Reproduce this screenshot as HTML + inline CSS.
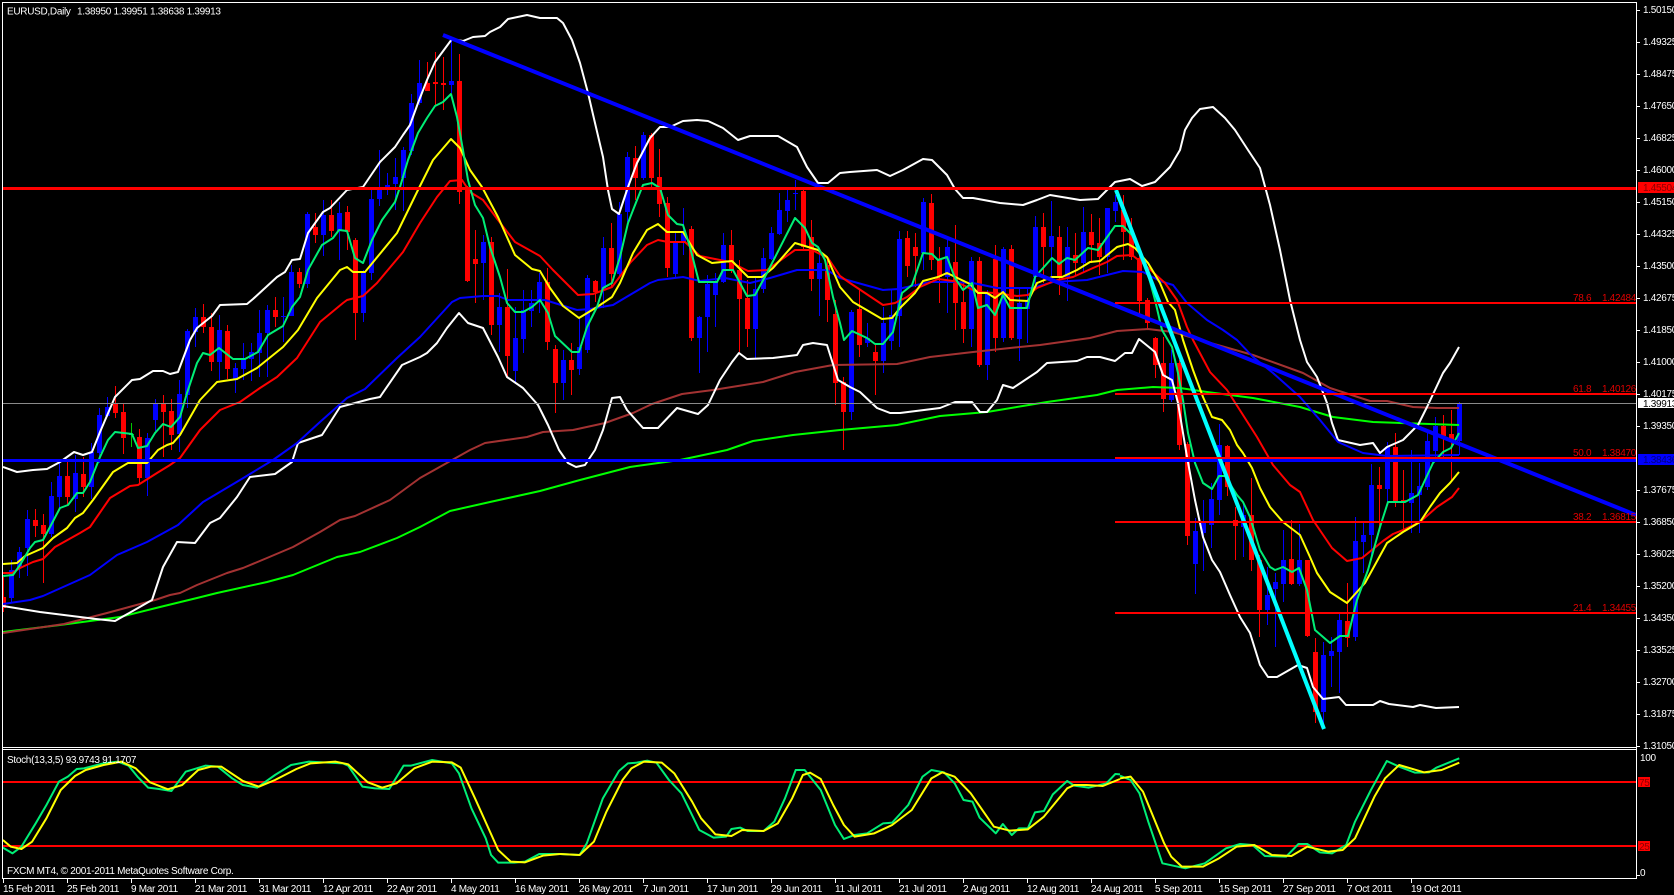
<!DOCTYPE html>
<html><head><meta charset="utf-8"><title>EURUSD Daily</title>
<style>
html,body{margin:0;padding:0;background:#000;width:1674px;height:895px;overflow:hidden}
svg{display:block}
text{font-family:"Liberation Sans",sans-serif;font-size:10px;letter-spacing:-.3px;fill:#fff}
.l{fill:none;stroke-linejoin:round;stroke-width:2}
.n{vector-effect:non-scaling-stroke}
</style></head><body>
<svg width="1674" height="895" viewBox="0 0 1674 895" xmlns="http://www.w3.org/2000/svg">
<defs><clipPath id="c"><rect x="3" y="3" width="1633" height="744"/></clipPath><clipPath id="s"><rect x="3" y="750" width="1633" height="128"/></clipPath></defs>
<rect width="1674" height="895" fill="#000"/>
<g clip-path="url(#c)">
<g shape-rendering="crispEdges" fill="none">
<path stroke="#00f" stroke-width="1" d="M11.5 560V603M19.5 547V578M27.5 510V576M51.5 482V537M59.5 460V510M75.5 455V512M91.5 443V499M99.5 408V463M107.5 397V417M147.5 433V496M155.5 399V431M179.5 380V452M187.5 329V408M195.5 308V347M219.5 315V380M235.5 363V393M243.5 343V380M251.5 343V381M259.5 310V377M267.5 305V377M283.5 297V342M291.5 265V316M307.5 212V288M323.5 200V256M339.5 202V260M363.5 270V322M371.5 190V280M379.5 150V206M387.5 173V195M395.5 158V210M403.5 147V211M411.5 94V155M419.5 60V105M451.5 40V93M483.5 235V300M499.5 293V352M515.5 307V382M523.5 290V353M531.5 290V327M539.5 273V313M563.5 350V400M579.5 317V375M587.5 275V353M603.5 237V308M619.5 202V277M627.5 152V222M643.5 132V180M675.5 233V278M683.5 208V255M699.5 316V373M707.5 275V352M715.5 273V327M723.5 233V283M755.5 277V358M763.5 248V293M771.5 227V260M779.5 193V235M787.5 190V222M795.5 180V210M819.5 250V316M851.5 310V420M867.5 323V347M883.5 307V373M891.5 290V350M899.5 231V347M923.5 198V270M947.5 240V313M971.5 257V347M987.5 290V380M1003.5 247V342M1019.5 287V361M1027.5 287V343M1035.5 216V290M1051.5 201V283M1067.5 227V301M1083.5 207V272M1107.5 208V273M1115.5 195V222M1171.5 350V402M1195.5 518V594M1203.5 500V571M1211.5 483V548M1219.5 424V515M1243.5 503V557M1267.5 567V625M1275.5 573V647M1283.5 530V602M1299.5 524V586M1323.5 642V725M1331.5 637V687M1339.5 613V693M1355.5 517V641M1363.5 523V573M1371.5 464V560M1387.5 442V503M1411.5 450V533M1419.5 463V533M1427.5 433V490M1435.5 417V457M1459.5 402V455"/>
<path stroke="#00f" stroke-width="5" d="M11.5 570V598M19.5 552V567M27.5 519V548M51.5 496V534M59.5 476V497M75.5 473V499M91.5 452V487M99.5 415V453M107.5 407V416M147.5 438V478M155.5 403V420M179.5 394V434M187.5 331V395M195.5 317V332M219.5 330V362M235.5 368V380M243.5 358V369M251.5 352V359M259.5 333V353M267.5 310V333M283.5 316V317M291.5 272V316M307.5 214V284M323.5 215V235M339.5 213V231M363.5 273V313M371.5 199V273M379.5 190V199M387.5 185V187M395.5 177V184M403.5 150V178M411.5 103V151M419.5 83V103M451.5 81V85M483.5 242V263M499.5 307V325M515.5 338V371M523.5 310V339M531.5 303V311M539.5 282V301M563.5 360V383M579.5 347V369M587.5 278V350M603.5 248V290M619.5 214V274M627.5 157V212M643.5 135V178M675.5 243V274M683.5 233V243M699.5 317V338M707.5 284V317M715.5 282V295M723.5 245V282M755.5 289V329M763.5 258V289M771.5 233V259M779.5 210V234M787.5 200V211M795.5 193V194M819.5 263V279M851.5 312V412M867.5 338V343M883.5 323V361M891.5 315V341M899.5 239V316M923.5 202V253M947.5 247V277M971.5 261V329M987.5 293V365M1003.5 249V338M1019.5 303V339M1027.5 300V309M1035.5 227V277M1051.5 236V247M1067.5 247V277M1083.5 232V263M1107.5 208V257M1115.5 202V211M1171.5 363V400M1195.5 531V564M1203.5 523V533M1211.5 499V525M1219.5 445V500M1243.5 515V527M1267.5 595V610M1275.5 582V589M1283.5 560V584M1299.5 560V584M1323.5 655V712M1331.5 651V656M1339.5 620V652M1355.5 541V637M1363.5 535V542M1371.5 485V535M1387.5 447V489M1411.5 493V503M1419.5 486V495M1427.5 441V487M1435.5 426V451M1459.5 403V441"/>
<path stroke="#f00" stroke-width="1" d="M3.5 577V612M35.5 509V537M43.5 514V583M67.5 460V505M83.5 457V497M115.5 386V418M123.5 404V454M139.5 429V485M163.5 395V457M171.5 399V450M203.5 304V333M211.5 313V371M227.5 325V379M275.5 297V327M299.5 268V288M315.5 213V243M331.5 200V237M347.5 206V250M355.5 238V340M427.5 62V91M435.5 52V105M443.5 57V110M459.5 54V204M467.5 186V282M475.5 230V303M491.5 237V335M507.5 269V377M547.5 268V350M555.5 345V413M571.5 343V395M595.5 280V302M611.5 223V287M635.5 146V200M651.5 133V187M659.5 149V217M667.5 197V277M691.5 226V341M731.5 230V273M739.5 260V352M747.5 280V347M803.5 190V250M811.5 220V291M827.5 260V322M835.5 300V405M843.5 377V450M859.5 290V357M875.5 343V395M907.5 231V277M915.5 233V287M931.5 194V270M939.5 247V303M955.5 225V330M963.5 283V343M979.5 257V367M995.5 245V352M1011.5 245V340M1043.5 213V283M1059.5 226V295M1075.5 233V275M1091.5 214V263M1099.5 218V275M1123.5 195V260M1131.5 218V260M1139.5 255V315M1147.5 298V330M1155.5 337V378M1163.5 337V412M1179.5 360V450M1187.5 442V545M1227.5 445V496M1235.5 507V560M1251.5 478V571M1259.5 555V637M1291.5 520V585M1307.5 560V637M1315.5 638V723M1347.5 583V647M1379.5 467V527M1395.5 433V507M1403.5 470V530M1443.5 415V457M1451.5 410V480"/>
<path stroke="#f00" stroke-width="5" d="M3.5 597V608M35.5 520V526M43.5 525V534M67.5 476V497M83.5 474V487M115.5 403V413M123.5 412V438M139.5 437V478M163.5 403V412M171.5 411V435M203.5 317V327M211.5 327V362M227.5 331V369M275.5 310V317M299.5 272V284M315.5 227V235M331.5 215V231M347.5 212V232M355.5 240V313M427.5 83V91M435.5 82V84M443.5 83V85M459.5 81V192M467.5 188V281M475.5 259V264M491.5 242V325M507.5 307V356M547.5 282V342M555.5 349V383M571.5 360V370M595.5 281V292M611.5 248V274M635.5 158V178M651.5 135V178M659.5 177V204M667.5 203V268M691.5 229V338M731.5 245V270M739.5 270V299M747.5 298V329M803.5 191V247M811.5 237V279M827.5 265V300M835.5 314V383M843.5 382V412M859.5 309V345M875.5 352V361M907.5 238V266M915.5 247V256M931.5 203V260M939.5 260V277M955.5 262V303M963.5 302V329M979.5 261V365M995.5 259V338M1011.5 249V338M1043.5 227V247M1059.5 237V277M1075.5 255V263M1091.5 232V245M1099.5 243V257M1123.5 210V232M1131.5 232V257M1139.5 258V301M1147.5 300V323M1155.5 338V365M1163.5 363V399M1179.5 363V445M1187.5 444V536M1227.5 446V487M1235.5 520V526M1251.5 515V560M1259.5 560V610M1291.5 559V584M1307.5 560V636M1315.5 652V712M1347.5 621V638M1379.5 485V489M1395.5 447V503M1403.5 500V501M1443.5 426V436M1451.5 434V442"/>
<path stroke="#0c0" stroke-width="1" d="M131.5 423V447M129 434.5H134"/>
</g>
<!-- lime -->
<polyline class="l" stroke="#0f0" points="3,632 60,625 120,617 160,607 197,598 217,593 267,582 293,575 337,557 360,552 397,538 420,527 450,511 490,502 540,491 580,480 630,467 680,460 727,450 753,441 793,435 840,430 897,425 940,416 987,412 1047,402 1097,395 1117,390 1153,387 1180,388 1207,392 1253,398 1300,407 1333,417 1373,422 1400,423 1459,425"/>
<!-- brown -->
<polyline class="l" stroke="#a33232" points="3,633 64,624 107,613 155,600 170,595 180,593 197,585 227,573 243,568 267,558 293,547 320,532 340,520 355,516 390,500 420,478 445,464 470,450 485,443 527,437 543,432 573,430 605,423 633,413 652,404 682,394 713,390 763,382 795,372 833,365 897,364 930,357 973,352 1010,348 1040,345 1090,338 1117,331 1148,329 1173,332 1207,342 1253,355 1303,373 1330,388 1370,401 1387,401 1413,407 1437,408 1459,408"/>
<!-- lower band -->
<polyline class="l" stroke="#fff" points="3,606 40,612 96,619 115,621 138,608 152,600 163,567 177,542 195,543 210,523 220,518 237,497 250,477 275,474 292,462 298,443 322,435 340,407 370,399 380,397 402,365 420,357 427,353 437,343 447,328 459,313 468,323 483,328 498,357 507,377 523,388 538,405 548,425 559,450 568,463 576,467 585,465 595,450 603,430 612,398 620,397 627,410 643,428 658,428 677,408 698,414 708,405 720,380 732,362 739,353 747,359 773,358 797,355 803,345 813,343 827,345 838,380 850,387 860,392 877,408 890,413 900,413 940,408 955,402 972,402 980,412 987,412 997,400 1003,385 1013,388 1037,372 1047,363 1077,361 1087,357 1100,357 1115,361 1125,353 1132,353 1139,339 1155,352 1163,375 1172,380 1178,403 1187,457 1195,500 1203,537 1212,560 1220,572 1230,595 1240,617 1250,633 1260,665 1268,677 1277,677 1298,665 1307,668 1313,687 1323,699 1339,697 1346,705 1373,705 1380,701 1389,704 1413,707 1420,705 1436,708 1459,707"/>
<!-- upper band -->
<polyline class="l" stroke="#fff" points="3,467 17,472 33,470 47,469 60,462 74,452 83,455 92,452 100,432 115,397 132,380 140,379 153,371 163,371 170,374 178,372 190,340 197,328 212,316 220,305 247,304 253,299 277,277 285,272 292,260 300,259 308,233 323,212 330,208 347,190 363,187 380,162 395,147 403,135 410,125 418,103 427,80 435,62 452,39 463,41 473,37 485,36 490,32 500,27 508,19 527,15 540,18 557,18 563,23 572,40 580,63 588,93 595,123 603,157 608,190 612,209 619,214 628,187 637,163 650,138 660,127 670,127 683,121 697,120 708,121 723,128 738,140 750,136 778,136 797,147 807,167 818,183 828,183 840,173 850,172 877,170 890,176 903,170 923,159 932,160 947,175 955,189 963,198 973,198 1000,203 1023,205 1037,200 1050,195 1080,200 1098,199 1115,182 1130,179 1142,186 1155,182 1170,167 1180,150 1185,130 1192,118 1200,109 1213,107 1225,118 1235,130 1248,150 1260,168 1270,205 1280,250 1290,300 1300,340 1307,362 1317,377 1327,403 1332,423 1338,440 1360,445 1373,443 1380,453 1387,447 1403,440 1418,425 1427,407 1435,390 1443,373 1450,363 1459,347"/>
<!-- blue ema -->
<polyline class="l" stroke="#00f" points="3,604 30,600 43,596 90,575 117,555 147,542 178,525 203,502 240,480 273,460 297,443 320,422 347,398 365,389 397,358 420,337 452,302 460,298 483,296 498,296 508,300 545,300 577,310 590,309 613,305 650,283 658,280 683,277 700,281 725,278 750,283 770,278 797,270 827,270 840,278 883,290 898,289 930,282 953,282 973,283 997,288 1033,288 1053,282 1087,280 1123,271 1143,272 1160,281 1173,285 1187,303 1207,320 1223,330 1237,340 1253,357 1273,373 1300,397 1320,420 1338,442 1363,453 1387,456 1459,455"/>
<!-- red ema -->
<polyline class="l" stroke="#f00" points="3,573 12,573 20,568 33,562 43,559 55,547 80,533 90,527 110,498 130,486 138,485 157,473 170,465 180,458 200,430 220,410 240,402 260,388 277,377 297,358 320,322 343,303 347,300 363,296 377,283 403,252 420,223 437,197 450,181 462,180 470,192 483,200 498,220 515,242 540,256 553,270 578,295 593,294 612,287 630,263 647,245 658,240 668,242 685,242 700,256 730,262 748,271 767,270 795,250 812,250 828,258 840,276 850,283 883,305 895,303 907,297 920,287 938,279 953,281 963,285 977,292 995,293 1017,296 1028,295 1037,288 1057,280 1073,277 1093,268 1107,262 1117,256 1132,255 1145,265 1165,283 1177,300 1187,327 1193,340 1210,372 1227,390 1243,415 1257,437 1273,465 1290,485 1300,492 1313,520 1332,548 1347,561 1362,558 1383,541 1393,534 1403,530 1420,522 1437,507 1452,497 1459,488"/>
<!-- yellow -->
<polyline class="l" stroke="#ff0" points="3,564 17,563 25,556 43,548 53,538 67,528 75,518 83,513 93,500 113,472 128,463 147,463 158,450 167,445 173,443 180,435 200,400 217,382 237,379 257,368 283,347 298,330 317,298 340,270 347,267 353,272 365,272 397,233 418,190 433,160 451,139 460,148 470,170 482,187 498,217 515,255 532,269 540,271 550,288 563,306 579,318 597,307 612,297 620,283 633,253 647,230 658,224 667,232 683,232 697,255 712,263 732,261 748,277 762,277 773,268 795,243 818,250 827,257 840,287 853,302 882,319 892,318 900,308 915,293 923,281 938,277 947,273 970,284 978,293 987,293 995,298 1003,292 1010,300 1028,301 1037,283 1052,277 1062,277 1077,270 1090,262 1100,261 1117,247 1128,244 1135,248 1148,263 1160,283 1168,302 1175,310 1183,340 1193,370 1203,397 1212,417 1222,420 1230,430 1237,445 1243,453 1252,468 1260,488 1270,507 1283,522 1300,535 1310,557 1317,573 1330,592 1347,603 1365,583 1387,543 1403,532 1420,522 1430,507 1440,493 1450,483 1459,472"/>
<!-- spring green -->
<polyline class="l" stroke="#00ee76" points="3,576 13,575 20,565 30,548 35,542 43,540 50,527 60,508 68,505 77,493 83,493 90,482 100,457 108,440 115,432 132,434 138,448 147,446 155,433 163,424 171,427 180,417 187,393 197,363 203,353 210,355 219,348 233,359 245,359 258,352 268,335 283,326 292,307 300,297 308,270 322,245 333,238 339,230 347,231 355,258 363,263 372,240 382,220 395,202 400,187 408,160 418,133 427,118 435,106 443,102 451,94 457,117 463,150 468,180 475,205 483,218 490,247 500,277 507,303 515,312 523,312 532,307 540,300 548,313 555,336 572,352 579,352 587,327 597,307 603,288 612,283 620,257 628,223 637,200 643,185 652,183 660,188 668,215 677,224 683,225 690,247 699,282 717,282 723,270 733,270 747,296 755,295 767,273 795,218 805,228 812,243 818,247 825,260 833,297 840,323 844,340 852,331 867,338 875,344 883,344 893,332 902,293 912,285 923,253 932,254 938,260 947,257 955,278 963,290 972,283 978,308 987,305 995,315 1003,295 1010,308 1027,308 1035,277 1052,258 1059,264 1067,258 1075,260 1088,248 1098,250 1115,226 1123,226 1132,235 1145,263 1155,300 1162,330 1172,347 1178,373 1183,400 1188,433 1195,463 1203,483 1212,489 1219,476 1225,476 1237,495 1243,502 1250,517 1260,550 1270,567 1275,570 1283,567 1292,572 1299,568 1307,590 1315,630 1330,643 1340,636 1348,636 1357,600 1368,570 1380,527 1388,502 1405,502 1418,495 1433,463 1443,452 1451,448 1459,433"/>
<!-- objects -->
<g shape-rendering="crispEdges">
<rect x="3" y="403" width="1633" height="1" fill="#8a8a8a"/>
<rect x="3" y="459" width="1633" height="3" fill="#00f"/>
</g>
<line x1="443" y1="35" x2="1636" y2="515" stroke="#00f" stroke-width="4"/>
<line x1="1116" y1="190" x2="1324" y2="729" stroke="#0ff" stroke-width="4"/>
<g shape-rendering="crispEdges">
<rect x="3" y="187" width="1633" height="3" fill="#f00"/>
<rect x="1115" y="302" width="521" height="2" fill="#f00"/>
<rect x="1115" y="393" width="521" height="2" fill="#f00"/>
<rect x="1115" y="457" width="521" height="2" fill="#f00"/>
<rect x="1115" y="521" width="521" height="2" fill="#f00"/>
<rect x="1115" y="612" width="521" height="2" fill="#f00"/>
</g>
</g>
<!-- fib labels -->
<g style="fill:#e00000">
<text x="1573" y="301" style="fill:#e00000">78.6</text><text x="1636" y="301" text-anchor="end" style="fill:#e00000">1.42484</text>
<text x="1573" y="392" style="fill:#e00000">61.8</text><text x="1636" y="392" text-anchor="end" style="fill:#e00000">1.40126</text>
<text x="1573" y="456" style="fill:#e00000">50.0</text><text x="1636" y="456" text-anchor="end" style="fill:#e00000">1.38470</text>
<text x="1573" y="520" style="fill:#e00000">38.2</text><text x="1636" y="520" text-anchor="end" style="fill:#e00000">1.36815</text>
<text x="1573" y="611" style="fill:#e00000">21.4</text><text x="1636" y="611" text-anchor="end" style="fill:#e00000">1.34455</text>
</g>
<!-- stoch -->
<g clip-path="url(#s)">
<g shape-rendering="crispEdges"><rect x="3" y="781" width="1633" height="2" fill="#f00"/><rect x="3" y="845" width="1633" height="2" fill="#f00"/></g>
<g transform="translate(0 695) scale(.35714 .33333)">
<polyline class="l n" stroke="#00ee76" points="8,458 35,475 60,455 100,385 130,330 165,260 190,245 215,222 235,220 290,205 330,200 360,212 385,245 415,278 445,282 480,288 520,230 575,212 610,215 650,250 680,270 720,278 770,240 815,210 865,200 960,205 975,212 1015,275 1050,280 1090,282 1130,212 1150,212 1210,195 1265,205 1285,235 1320,340 1360,430 1375,480 1395,503 1440,503 1470,500 1510,477 1568,477"/>
<polyline class="l n" stroke="#ff0" points="8,435 30,455 60,462 90,440 130,370 170,285 210,243 240,225 290,210 340,200 380,220 420,262 470,283 510,270 555,225 590,215 620,215 680,258 725,275 770,255 830,222 870,205 940,200 975,208 1030,262 1070,278 1110,265 1160,220 1210,200 1265,202 1290,218 1330,310 1395,465 1430,500 1470,502 1520,482 1568,477"/>
</g>
<g transform="translate(560 695) scale(.35714 .33333)">
<polyline class="l n" stroke="#00ee76" points="0,477 55,480 75,445 120,310 165,228 190,205 215,203 245,197 270,203 305,255 340,295 390,405 430,428 465,425 480,402 505,398 525,408 570,408 600,380 630,310 660,225 685,225 730,285 770,390 795,432 825,420 860,415 905,385 930,383 975,330 1015,245 1040,225 1075,232 1105,265 1130,315 1155,320 1175,368 1220,415 1240,387 1265,420 1285,400 1310,400 1330,352 1355,348 1380,298 1420,258 1440,272 1480,278 1530,265 1555,237 1568,238"/>
<polyline class="l n" stroke="#ff0" points="0,477 55,480 95,440 130,350 175,255 200,220 235,200 285,203 320,235 370,320 395,370 435,418 480,423 510,405 570,408 610,385 650,310 680,240 700,233 730,252 765,330 795,390 825,425 880,415 930,390 985,345 1040,250 1070,232 1105,245 1150,295 1215,395 1260,407 1310,403 1355,365 1420,280 1440,270 1475,270 1520,273 1568,252"/>
</g>
<g transform="translate(1120 695) scale(.3534 .33333)">
<polyline class="l n" stroke="#00ee76" points="0,242 30,255 55,295 80,380 120,505 185,520 240,505 300,460 340,447 375,450 410,483 470,485 505,447 530,447 565,472 600,475 640,450 665,380 710,285 755,198 790,215 835,233 875,232 895,218 960,190"/>
<polyline class="l n" stroke="#ff0" points="0,250 30,245 65,290 125,445 145,485 175,515 235,515 280,490 330,455 380,450 430,480 485,483 530,455 590,470 630,465 665,430 720,305 750,250 790,210 860,232 910,225 960,203"/>
</g>
</g>
<!-- frame -->
<g fill="#fff" shape-rendering="crispEdges">
<rect x="2" y="2" width="1635" height="1"/>
<rect x="2" y="2" width="1" height="877"/>
<rect x="1636" y="2" width="1" height="877"/>
<rect x="2" y="747" width="1635" height="1"/>
<rect x="2" y="749" width="1635" height="1"/>
<rect x="2" y="878" width="1635" height="1"/>
<path d="M1637 10h3v1h-3zM1637 42h3v1h-3zM1637 74h3v1h-3zM1637 106h3v1h-3zM1637 138h3v1h-3zM1637 170h3v1h-3zM1637 202h3v1h-3zM1637 234h3v1h-3zM1637 266h3v1h-3zM1637 298h3v1h-3zM1637 330h3v1h-3zM1637 362h3v1h-3zM1637 394h3v1h-3zM1637 426h3v1h-3zM1637 490h3v1h-3zM1637 522h3v1h-3zM1637 554h3v1h-3zM1637 586h3v1h-3zM1637 618h3v1h-3zM1637 650h3v1h-3zM1637 682h3v1h-3zM1637 714h3v1h-3zM1637 746h3v1h-3zM1637 875h3v1h-3z"/>
<path d="M3 879h1v4H3zM67 879h1v4h-1zM131 879h1v4h-1zM195 879h1v4h-1zM259 879h1v4h-1zM323 879h1v4h-1zM387 879h1v4h-1zM451 879h1v4h-1zM515 879h1v4h-1zM579 879h1v4h-1zM643 879h1v4h-1zM707 879h1v4h-1zM771 879h1v4h-1zM835 879h1v4h-1zM899 879h1v4h-1zM963 879h1v4h-1zM1027 879h1v4h-1zM1091 879h1v4h-1zM1155 879h1v4h-1zM1219 879h1v4h-1zM1283 879h1v4h-1zM1347 879h1v4h-1zM1411 879h1v4h-1z"/>
</g>
<!-- tags -->
<g shape-rendering="crispEdges">
<rect x="1638" y="182" width="36" height="11" fill="#f00"/>
<rect x="1638" y="398" width="36" height="10" fill="#fff"/>
<rect x="1638" y="454" width="36" height="11" fill="#00f"/>
<rect x="1638" y="777" width="12" height="10" fill="#f00"/>
<rect x="1638" y="841" width="12" height="10" fill="#f00"/>
</g>
<!-- axis labels -->
<text x="1643" y="13">1.50150</text><text x="1643" y="45">1.49325</text><text x="1643" y="77">1.48475</text><text x="1643" y="109">1.47650</text><text x="1643" y="141">1.46825</text><text x="1643" y="173">1.46000</text><text x="1643" y="205">1.45150</text><text x="1643" y="237">1.44325</text><text x="1643" y="269">1.43500</text><text x="1643" y="301">1.42675</text><text x="1643" y="333">1.41850</text><text x="1643" y="365">1.41000</text><text x="1643" y="397">1.40175</text><text x="1643" y="429">1.39350</text><text x="1643" y="493">1.37675</text><text x="1643" y="525">1.36850</text><text x="1643" y="557">1.36025</text><text x="1643" y="589">1.35200</text><text x="1643" y="621">1.34350</text><text x="1643" y="653">1.33525</text><text x="1643" y="685">1.32700</text><text x="1643" y="717">1.31875</text><text x="1643" y="749">1.31050</text>
<text x="1643" y="191" style="fill:#8a0000">1.45504</text>
<text x="1643" y="407" style="fill:#000">1.39913</text>
<text x="1643" y="463" style="fill:#000080">1.38436</text>
<text x="1640" y="761">100</text><text x="1640" y="876">0</text>
<text x="1639" y="786" style="fill:#8a0000">75</text><text x="1639" y="850" style="fill:#8a0000">25</text>
<!-- titles -->
<text x="7" y="14.5">EURUSD,Daily</text><text x="77" y="14.5">1.38950 1.39951 1.38638 1.39913</text>
<text x="7" y="763">Stoch(13,3,5) 93.9743 91.1707</text>
<text x="7" y="874">FXCM MT4, © 2001-2011 MetaQuotes Software Corp.</text>
<!-- dates -->
<text x="3" y="892">15 Feb 2011</text><text x="67" y="892">25 Feb 2011</text><text x="131" y="892">9 Mar 2011</text><text x="195" y="892">21 Mar 2011</text><text x="259" y="892">31 Mar 2011</text><text x="323" y="892">12 Apr 2011</text><text x="387" y="892">22 Apr 2011</text><text x="451" y="892">4 May 2011</text><text x="515" y="892">16 May 2011</text><text x="579" y="892">26 May 2011</text><text x="643" y="892">7 Jun 2011</text><text x="707" y="892">17 Jun 2011</text><text x="771" y="892">29 Jun 2011</text><text x="835" y="892">11 Jul 2011</text><text x="899" y="892">21 Jul 2011</text><text x="963" y="892">2 Aug 2011</text><text x="1027" y="892">12 Aug 2011</text><text x="1091" y="892">24 Aug 2011</text><text x="1155" y="892">5 Sep 2011</text><text x="1219" y="892">15 Sep 2011</text><text x="1283" y="892">27 Sep 2011</text><text x="1347" y="892">7 Oct 2011</text><text x="1411" y="892">19 Oct 2011</text>
</svg>
</body></html>
